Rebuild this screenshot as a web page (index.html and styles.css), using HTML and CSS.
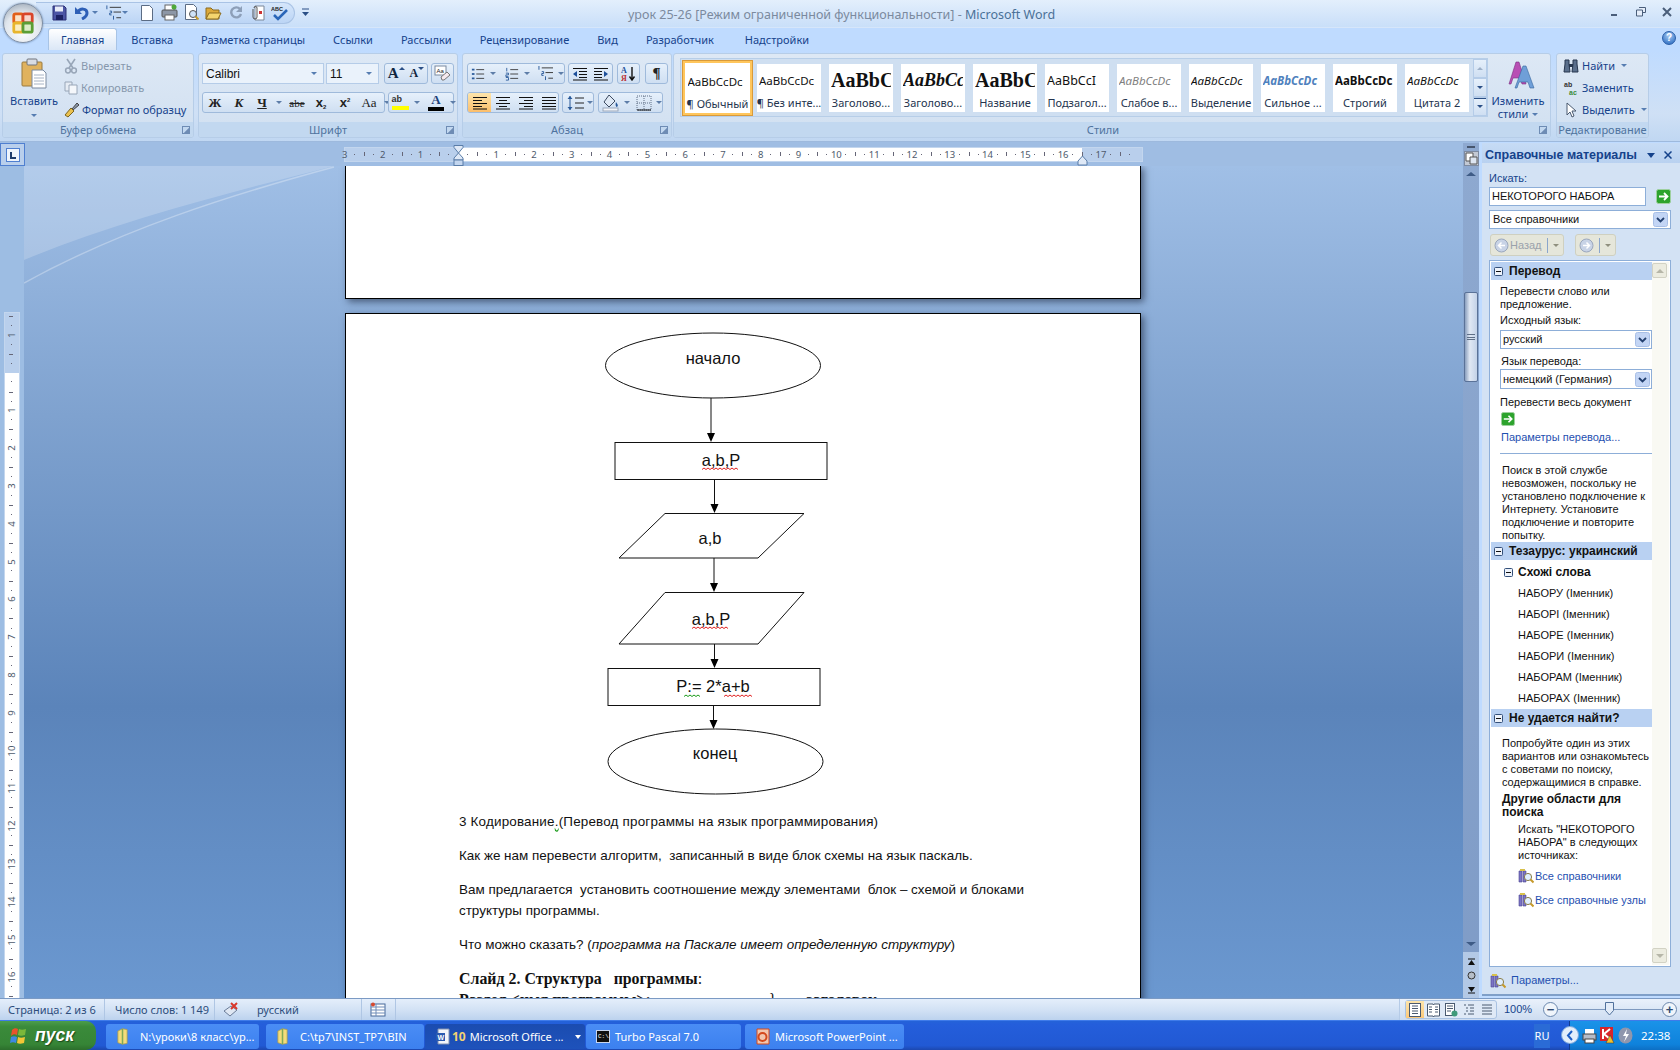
FILE: index.html
```html
<!DOCTYPE html>
<html lang="ru">
<head>
<meta charset="utf-8">
<title>урок 25-26 - Microsoft Word</title>
<link rel="stylesheet" href="styles.css">
</head>
<body>
<svg class="defs" width="0" height="0">
  <symbol id="lines-l" viewBox="0 0 16 14"><path d="M1 1.5h14M1 4.5h9M1 7.5h14M1 10.5h9M1 13h14" stroke="#111"/></symbol>
  <symbol id="lines-c" viewBox="0 0 16 14"><path d="M1 1.5h14M4 4.5h8M1 7.5h14M4 10.5h8M1 13h14" stroke="#111"/></symbol>
  <symbol id="lines-r" viewBox="0 0 16 14"><path d="M1 1.5h14M6 4.5h9M1 7.5h14M6 10.5h9M1 13h14" stroke="#111"/></symbol>
  <symbol id="lines-j" viewBox="0 0 16 14"><path d="M1 1.5h14M1 4.5h14M1 7.5h14M1 10.5h14M1 13h14" stroke="#111"/></symbol>
  <symbol id="bul" viewBox="0 0 16 16"><rect x="1" y="2" width="3" height="2" fill="#2a5a9a"/><rect x="1" y="7" width="3" height="2" fill="#2a5a9a"/><rect x="1" y="12" width="3" height="2" fill="#2a5a9a"/><path d="M6 3h9M6 8h9M6 13h9" stroke="#333"/></symbol>
  <symbol id="num" viewBox="0 0 16 16"><path d="M2 1v4M1 7h3v2H1v2h3M1 12h3v3H1" stroke="#2a5a9a" fill="none"/><path d="M6 3h9M6 8h9M6 13h9" stroke="#333"/></symbol>
  <symbol id="multi" viewBox="0 0 18 16"><path d="M2 0v4M5 6h2v2H5v2h2M9 11v4" stroke="#2a5a9a" fill="none"/><path d="M5 2h12M9 7h8M12 13h5" stroke="#333"/></symbol>
  <symbol id="outd" viewBox="0 0 16 14"><path d="M1 1.5h14M7 4.5h8M7 7.5h8M7 10.5h8M1 13h14" stroke="#111"/><path d="M1 7l4-3v6z" fill="#1d4f9a"/></symbol>
  <symbol id="ind" viewBox="0 0 16 14"><path d="M1 1.5h14M1 4.5h8M1 7.5h8M1 10.5h8M1 13h14" stroke="#111"/><path d="M15 7l-4-3v6z" fill="#1d4f9a"/></symbol>
  <symbol id="go" viewBox="0 0 15 15"><rect x=".5" y=".5" width="14" height="14" rx="2" fill="#2da32d" stroke="#9fd09f"/><path d="M3 7.5h8M8 4l3.5 3.5L8 11" stroke="#fff" stroke-width="1.8" fill="none"/></symbol>
  <symbol id="chev" viewBox="0 0 15 15"><rect x=".5" y=".5" width="14" height="14" rx="2" fill="#c3d5f5" stroke="#a8bfe6"/><path d="M4 6l3.5 3.5L11 6" stroke="#24406f" stroke-width="1.8" fill="none"/></symbol>
  <symbol id="tog" viewBox="0 0 9 9"><rect x=".5" y=".5" width="8" height="8" rx="1" fill="#eef3fb" stroke="#34507a"/><path d="M2 4.5h5" stroke="#111"/></symbol>
  <symbol id="ref" viewBox="0 0 16 16"><path d="M1 3h3v11H1zM5 3h3v11H5z" fill="#7b74c4" stroke="#4a4590" stroke-width=".6"/><path d="M2 1h5v2H2z" fill="#d8c14c"/><circle cx="10" cy="9" r="3.6" fill="#dfeeff" stroke="#8a7d46"/><path d="M12.5 11.5l3 3" stroke="#c79a2b" stroke-width="2"/></symbol>
  <symbol id="folder" viewBox="0 0 14 22"><path d="M1 4l6-3 6 1v18l-6 1-6-2z" fill="#f3dc7a" stroke="#a79a4e"/><path d="M7 1v20" stroke="#7eaa58" stroke-width="2"/></symbol>
</svg>

<div class="app">
  <header class="titlebar">
    <div class="orb">
      <svg width="24" height="24" viewBox="0 0 26 26"><rect x="3" y="3" width="10" height="10" rx="2" fill="#fbe3c8" stroke="#e2601a" stroke-width="3"/><rect x="13" y="3" width="10" height="10" rx="2" fill="#f8d6cc" stroke="#d9462a" stroke-width="3"/><rect x="3" y="13" width="10" height="10" rx="2" fill="#fbeec2" stroke="#e8b52c" stroke-width="3"/><rect x="13" y="13" width="10" height="10" rx="2" fill="#dcedc6" stroke="#5c9e34" stroke-width="3"/></svg>
    </div>
    <div class="qat">
      <svg class="q-save" width="15" height="16" viewBox="0 0 15 16"><path d="M1 1h11l2 2v12H1z" fill="#4b55a5" stroke="#2c3177"/><rect x="3" y="1.5" width="8" height="5" fill="#e8ecf8"/><rect x="4" y="10" width="7" height="5" fill="#1c2264"/></svg>
      <svg class="q-undo" width="14" height="15" viewBox="0 0 14 15"><path d="M3 7c2-4 9-4 9 1 0 3-3 5-5 6" stroke="#2e5fb6" stroke-width="3" fill="none"/><path d="M0 2v7h7z" fill="#2e5fb6"/></svg>
      <i class="dd dd-q1"></i>
      <svg class="q-multi" width="17" height="16"><use href="#multi"/></svg>
      <i class="dd dd-q2"></i>
      <svg class="q-new" width="12" height="16" viewBox="0 0 12 16"><path d="M.5.5h8l3 3v12H.5z" fill="#fff" stroke="#5b6c84"/></svg>
      <svg class="q-print" width="17" height="17" viewBox="0 0 17 17"><rect x="4" y="1" width="9" height="6" fill="#fff" stroke="#666"/><rect x="1" y="6" width="15" height="7" rx="1" fill="#8d97a6" stroke="#555"/><rect x="4" y="11" width="9" height="5" fill="#fff" stroke="#666"/><circle cx="13" cy="3" r="2.5" fill="#4fa93a"/></svg>
      <svg class="q-prev" width="14" height="17" viewBox="0 0 14 17"><path d="M.5.5h8l3 3v12H.5z" fill="#fff" stroke="#5b6c84"/><circle cx="8" cy="10" r="3.5" fill="#cfe3f8" stroke="#555"/><path d="M10.5 12.5l3 3" stroke="#c79a2b" stroke-width="2"/></svg>
      <svg class="q-open" width="17" height="16" viewBox="0 0 17 16"><path d="M1 3h5l2 2h6v9H1z" fill="#dca93a" stroke="#8a6a1e"/><path d="M1 14l3-6h12l-3 6z" fill="#f4d56e" stroke="#8a6a1e"/></svg>
      <svg class="q-redo" width="13" height="15" viewBox="0 0 13 15"><path d="M10 4a5 5 0 1 0 1 5" stroke="#8d9fb8" stroke-width="2.4" fill="none"/><path d="M12 1v6H6z" fill="#8d9fb8"/></svg>
      <svg class="q-att" width="15" height="16" viewBox="0 0 15 16"><path d="M5 1h9v14H5z" fill="#fff" stroke="#7b8798"/><path d="M3 4v8a2 2 0 0 0 4 0V3a1.400 1.400 0 0 0-3 0" fill="none" stroke="#555"/><rect x="9" y="6" width="3" height="3" fill="#c33"/></svg>
      <svg class="q-spell" width="17" height="16" viewBox="0 0 17 16"><text x="0" y="6" class="svg-abc">ABC</text><path d="M3 10l4 4 9-9" stroke="#2b66b8" stroke-width="2.6" fill="none"/></svg>
    </div>
    <svg class="q-cust" width="7" height="9" viewBox="0 0 7 9"><path d="M0 1h7" stroke="#2a4f86"/><path d="M0 4h7L3.500 8z" fill="#2a4f86"/></svg>
    <div class="doc-title">урок 25-26 [Режим ограниченной функциональности] - <span class="doc-title-app">Microsoft Word</span></div>
    <div class="winctl">
      <svg width="10" height="10" viewBox="0 0 10 10"><path d="M1 7h6v2H1z" fill="#4a5e7a"/></svg>
      <svg width="10" height="10" viewBox="0 0 10 10"><path d="M3 .5h6.500v5H7M.5 3h6v6h-6z" fill="#e6eefa" stroke="#4a5e7a"/></svg>
      <svg width="10" height="10" viewBox="0 0 10 10"><path d="M1 1l8 8M9 1L1 9" stroke="#4a5e7a" stroke-width="2"/></svg>
    </div>
  </header>

  <nav class="tabs">
    <span class="tab tab-active">Главная</span>
    <span class="tab">Вставка</span>
    <span class="tab">Разметка страницы</span>
    <span class="tab">Ссылки</span>
    <span class="tab">Рассылки</span>
    <span class="tab">Рецензирование</span>
    <span class="tab">Вид</span>
    <span class="tab">Разработчик</span>
    <span class="tab tab-last">Надстройки</span>
    <span class="help">?</span>
  </nav>

  <section class="ribbon">
    <div class="group g-clip">
      <div class="g-body clip-body">
        <div class="paste">
          <svg width="26" height="31" viewBox="0 0 26 31"><rect x="1" y="4" width="20" height="24" rx="1" fill="#e0b25e" stroke="#9a7a3e"/><rect x="6" y="1" width="10" height="6" rx="1" fill="#d8dce4" stroke="#70747c"/><path d="M11 12h11l3 3v15H11z" fill="#fff" stroke="#7a8aa0"/><path d="M13 17h10M13 20h10M13 23h10M13 26h10" stroke="#a7b3c4"/></svg>
          <span class="paste-l">Вставить</span>
          <i class="dd"></i>
        </div>
        <div class="clip-list">
          <span class="clip-i off"><svg width="14" height="16" viewBox="0 0 14 16"><path d="M3 1l6 9M11 1L5 10" stroke="#98a6b8" stroke-width="1.600"/><circle cx="4" cy="12.500" r="2.400" fill="none" stroke="#98a6b8" stroke-width="1.500"/><circle cx="10" cy="12.500" r="2.400" fill="none" stroke="#98a6b8" stroke-width="1.500"/></svg>Вырезать</span>
          <span class="clip-i off"><svg width="14" height="14" viewBox="0 0 14 14"><path d="M1 1h7v9H1z" fill="#e6ecf4" stroke="#98a6b8"/><path d="M5 4h8v9H5z" fill="#f4f7fb" stroke="#98a6b8"/></svg>Копировать</span>
          <span class="clip-i"><svg width="15" height="16" viewBox="0 0 15 16"><path d="M8 7l5-6 2 2-6 5z" fill="#8a98ad" stroke="#444"/><path d="M1 13l6-7 3 3-6 6z" fill="#eac14f" stroke="#7a6420"/></svg>Формат по образцу</span>
        </div>
      </div>
      <div class="g-label">Буфер обмена<i class="launch"></i></div>
    </div>

    <div class="group g-font">
      <div class="g-body tool-rows">
        <div class="tool-row">
          <span class="combo c-font">Calibri<i class="dd"></i></span>
          <span class="combo c-size">11<i class="dd"></i></span>
          <span class="tg tg-grow"><b class="t-a1">A</b><i class="up"></i><b class="t-a2">A</b><i class="down"></i></span>
          <span class="tg tg-one"><svg width="17" height="17" viewBox="0 0 17 17"><rect x="1" y="1" width="11" height="9" fill="#fff" stroke="#7a8aa0"/><text x="2.500" y="8" class="svg-aa">Aa</text><path d="M7 12l6-5 3 3-6 5H8z" fill="#f4e9ee" stroke="#777"/></svg></span>
        </div>
        <div class="tool-row">
          <span class="tg tg-bold">
            <b class="tb ser">Ж</b><b class="tb ser ital">К</b><b class="tb ser und">Ч</b><i class="dd dd-b"></i><span class="tb strike">abe</span><b class="tb xsub">x<small>2</small></b><b class="tb xsup">x<small>2</small></b><span class="tb ser aa">Aa</span><i class="dd dd-b"></i>
          </span>
          <span class="tg tg-color">
            <span class="col-i"><span class="hl">ab</span></span><i class="dd dd-b"></i>
            <span class="col-i col-a"><b class="ca">A</b><i class="black-bar"></i></span><i class="dd dd-b"></i>
          </span>
        </div>
      </div>
      <div class="g-label">Шрифт<i class="launch"></i></div>
    </div>

    <div class="group g-para">
      <div class="g-body tool-rows">
        <div class="tool-row">
          <span class="tg tg-list"><span class="ic"><svg width="14" height="14"><use href="#bul"/></svg></span><i class="dd dd-b"></i><span class="ic"><svg width="14" height="14"><use href="#num"/></svg></span><i class="dd dd-b"></i><span class="ic"><svg width="17" height="15"><use href="#multi"/></svg></span><i class="dd dd-b"></i></span>
          <span class="tg tg-ind"><span class="ic"><svg width="16" height="14"><use href="#outd"/></svg></span><span class="ic"><svg width="16" height="14"><use href="#ind"/></svg></span></span>
          <span class="tg tg-one"><svg width="15" height="16" viewBox="0 0 15 16"><text x="0" y="7" class="svg-sort1">А</text><text x="0" y="15" class="svg-sort2">Я</text><path d="M11 1v12M8.500 10.500l2.500 3.500 2.500-3.500" stroke="#111" fill="none" stroke-width="1.400"/></svg></span>
          <span class="tg tg-one pil">¶</span>
        </div>
        <div class="tool-row">
          <span class="tg tg-align"><span class="ic on"><svg width="16" height="14"><use href="#lines-l"/></svg></span><span class="ic"><svg width="16" height="14"><use href="#lines-c"/></svg></span><span class="ic"><svg width="16" height="14"><use href="#lines-r"/></svg></span><span class="ic"><svg width="16" height="14"><use href="#lines-j"/></svg></span></span>
          <span class="tg tg-sp"><svg width="17" height="16" viewBox="0 0 17 16"><path d="M3 1v14" stroke="#2a5a9a"/><path d="M.5 4L3 1l2.500 3zM.5 12L3 15l2.500-3z" fill="#2a5a9a"/><path d="M8 3h9M8 8h9M8 13h9" stroke="#222"/></svg><i class="dd dd-b"></i></span>
          <span class="tg tg-fill"><svg class="fill-i" width="18" height="18" viewBox="0 0 18 18"><path d="M7 1l6 6-6 6-5-5z" fill="#dfe9f5" stroke="#3c4a60"/><path d="M14 8c1 2 3 3 1 5-1 0-2-2-1-5z" fill="#2a5a9a"/><rect x="1" y="14" width="15" height="3" fill="#f2f4f8" stroke="#9aa8bc"/></svg><i class="dd dd-b"></i><svg class="fill-i" width="16" height="16" viewBox="0 0 16 16"><path d="M1 1h14v14H1zM8 1v14M1 8h14" fill="none" stroke="#5f6f85" stroke-dasharray="1 1"/><path d="M1 15h14" stroke="#111"/></svg><i class="dd dd-b"></i></span>
        </div>
      </div>
      <div class="g-label">Абзац<i class="launch"></i></div>
    </div>

    <div class="group g-styles">
      <div class="g-body styles-body">
        <div class="gallery">
          <div class="st st-active"><span class="st-s">AaBbCcDc</span><span class="st-l">¶ Обычный</span></div>
          <div class="st"><span class="st-s">AaBbCcDc</span><span class="st-l">¶ Без инте...</span></div>
          <div class="st"><span class="st-s s-h1">AaBbC</span><span class="st-l">Заголово...</span></div>
          <div class="st"><span class="st-s s-h2">AaBbCc</span><span class="st-l">Заголово...</span></div>
          <div class="st"><span class="st-s s-ti">AaBbC</span><span class="st-l">Название</span></div>
          <div class="st"><span class="st-s s-sub">AaBbCcI</span><span class="st-l">Подзагол...</span></div>
          <div class="st"><span class="st-s s-faint">AaBbCcDc</span><span class="st-l">Слабое в...</span></div>
          <div class="st"><span class="st-s s-em">AaBbCcDc</span><span class="st-l">Выделение</span></div>
          <div class="st"><span class="st-s s-str">AaBbCcDc</span><span class="st-l">Сильное ...</span></div>
          <div class="st"><span class="st-s s-bold">AaBbCcDc</span><span class="st-l">Строгий</span></div>
          <div class="st"><span class="st-s s-em">AaBbCcDc</span><span class="st-l">Цитата 2</span></div>
          <div class="gal-btns"><span class="gb"><i class="up"></i></span><span class="gb"><i class="down"></i></span><span class="gb gb-more"><i class="down"></i></span></div>
        </div>
        <div class="change">
          <svg width="34" height="30" viewBox="0 0 34 30"><path d="M8 24L15 2h3l7 22h-4l-2-6h-7l-2 6z" fill="#b84fb4" stroke="#7a2f80" stroke-width=".6"/><path d="M14 28L22 6h3l8 22h-4l-2-6h-9l-2 6z" fill="#6f9fd8" stroke="#38669e" stroke-width=".6"/></svg>
          <span class="change-l">Изменить</span>
          <span class="change-l">стили<i class="dd"></i></span>
        </div>
      </div>
      <div class="g-label lab-styles">Стили<i class="launch"></i></div>
    </div>

    <div class="group g-edit">
      <div class="g-body edit-body">
        <span class="ed-i"><svg width="16" height="14" viewBox="0 0 16 14"><path d="M2 1h4v4l1 8H1l1-8zM10 1h4v4l1 8H9l1-8z" fill="#5a6f8c" stroke="#26364e"/><path d="M6 5h4v3H6z" fill="#26364e"/></svg>Найти<i class="dd"></i></span>
        <span class="ed-i"><svg width="16" height="16" viewBox="0 0 16 16"><text x="1" y="7" class="svg-rep1">ab</text><text x="6" y="15" class="svg-rep2">ac</text></svg>Заменить</span>
        <span class="ed-i"><svg width="16" height="16" viewBox="0 0 16 16"><path d="M4 1v12l3-3 2 5 2-1-2-5h4z" fill="#fff" stroke="#4b5a70"/></svg>Выделить<i class="dd"></i></span>
      </div>
      <div class="g-label">Редактирование</div>
    </div>
  </section>

  <div class="workspace">
    <div class="main">
      <div class="ruler-row">
        <span class="tabsel"><svg width="14" height="14" viewBox="0 0 14 14"><rect x=".5" y=".5" width="13" height="13" fill="#eef4fc" stroke="#4f7fd0"/><path d="M5 4v6h5" stroke="#1c3a6a" stroke-width="2" fill="none"/></svg></span>
        <div class="ruler">
          <span class="rc rc-start">3</span><span class="rc">2</span><span class="rc">1</span><span class="rc"></span><span class="rc">1</span><span class="rc">2</span><span class="rc">3</span><span class="rc">4</span><span class="rc">5</span><span class="rc">6</span><span class="rc">7</span><span class="rc">8</span><span class="rc">9</span><span class="rc">10</span><span class="rc">11</span><span class="rc">12</span><span class="rc">13</span><span class="rc">14</span><span class="rc">15</span><span class="rc">16</span><span class="rc">17</span><span class="rc rc-end"></span>
          <svg class="ind-mark" width="11" height="21" viewBox="0 0 11 21"><path d="M1 .5h9v2L5.500 8 1 2.500zM5.500 8L10 13v2H1v-2z" fill="#dfe9f7" stroke="#5a7da8"/><rect x="1" y="15" width="9" height="5.500" fill="#c3d6ef" stroke="#5a7da8"/></svg>
          <svg class="rind-mark" width="11" height="11" viewBox="0 0 11 11"><path d="M5.500 1L10 6v4H1V6z" fill="#dfe9f7" stroke="#5a7da8"/></svg>
        </div>
      </div>
      <div class="doc-row">
        <div class="vcol">
          <div class="vruler">
            <span class="vc"><em>1</em></span><span class="vc"></span><span class="vc"><em>1</em></span><span class="vc"><em>2</em></span><span class="vc"><em>3</em></span><span class="vc"><em>4</em></span><span class="vc"><em>5</em></span><span class="vc"><em>6</em></span><span class="vc"><em>7</em></span><span class="vc"><em>8</em></span><span class="vc"><em>9</em></span><span class="vc"><em>10</em></span><span class="vc"><em>11</em></span><span class="vc"><em>12</em></span><span class="vc"><em>13</em></span><span class="vc"><em>14</em></span><span class="vc"><em>15</em></span><span class="vc"><em>16</em></span><span class="vc"></span>
          </div>
        </div>
        <div class="doc">
          <svg class="swoosh" width="340" height="120" viewBox="24 166 340 120"><path d="M24 166H334C240 190 120 220 24 260z" fill="#fff" opacity=".2"/><path d="M24 283C120 230 230 195 334 167" fill="none" stroke="#fff" stroke-opacity=".3" stroke-width="1.500"/></svg>
          <div class="page page-1"></div>
          <div class="page page-2">
            <svg class="chart" width="794" height="497" viewBox="346 314 794 497">
              <g class="ln">
                <ellipse cx="713" cy="365.500" rx="107.500" ry="32.500"/>
                <rect x="615" y="442.500" width="212" height="37"/>
                <path d="M665 513.500H804L758 558H619z"/>
                <path d="M665 592.500H804L758 644H619z"/>
                <rect x="608" y="668.500" width="212" height="37"/>
                <ellipse cx="715.500" cy="761.500" rx="107.500" ry="32.500"/>
                <path d="M711 398V434M714.500 479.500V505"/>
                <path d="M714 558V584M714.500 644V660M713.500 705.500V721"/>
              </g>
              <g class="hd">
                <path d="M707 433h8l-4 9zM710.500 504h8l-4 9zM710 583h8l-4 9zM710.500 659h8l-4 9zM709.500 720h8l-4 9z"/>
              </g>
              <g class="ct">
                <text x="713" y="364">начало</text>
                <text x="721" y="466">a,b,P</text>
                <text x="710" y="544">a,b</text>
                <text x="711" y="625">a,b,P</text>
                <text x="713" y="692">P:= 2*a+b</text>
                <text x="715" y="759">конец</text>
              </g>
              <g class="sq-red">
                <path d="M702 469.500l2-1.500 2 1.500 2-1.500 2 1.500 2-1.500 2 1.500 2-1.500 2 1.500 2-1.500 2 1.500 2-1.500 2 1.500 2-1.500 2 1.500 2-1.500 2 1.500 2-1.500 2 1.500"/>
                <path d="M692 628.500l2-1.500 2 1.500 2-1.500 2 1.500 2-1.500 2 1.500 2-1.500 2 1.500 2-1.500 2 1.500 2-1.500 2 1.500 2-1.500 2 1.500 2-1.500 2 1.500 2-1.500 2 1.500"/>
                <path d="M724 696.500l2-1.500 2 1.500 2-1.500 2 1.500 2-1.500 2 1.500 2-1.500 2 1.500 2-1.500 2 1.500 2-1.500 2 1.500 2-1.500 2 1.500"/>
              </g>
              <path class="sq-green" d="M684 696.500l2-1.500 2 1.500 2-1.500 2 1.500 2-1.500 2 1.500 2-1.500 2 1.500"/>
            </svg>
            <div class="text">
              <p class="first">3 Кодирование<span class="sq">.</span>(Перевод программы на язык программирования)</p>
              <p>Как же нам перевести алгоритм,&nbsp; записанный в виде блок схемы на язык паскаль.</p>
              <p>Вам предлагается&nbsp; установить соотношение между элементами&nbsp; блок – схемой и блоками<br>структуры программы.</p>
              <p>Что можно сказать? (<em>программа на Паскале имеет определенную структуру</em>)</p>
              <p class="slide"><b>Слайд 2. Структура &nbsp; программы</b>:</p>
              <p class="slide"><b>Раздел &lt;имя программы&gt;;</b><span class="curly">}</span><b>заголовок</b></p>
            </div>
          </div>
        </div>
      </div>
    </div>

    <div class="vscroll">
      <i class="split"></i>
      <span class="vs-ico"><svg width="13" height="13" viewBox="0 0 13 13"><path d="M1 1h7v8H1z" fill="#fff" stroke="#555"/><path d="M5 5h7v7H5z" fill="#dde6f2" stroke="#555"/></svg></span>
      <i class="arr-up"></i>
      <span class="thumb"><i class="grip"></i></span>
      <i class="arr-dn"></i>
      <span class="vs-btns">
        <svg width="9" height="9" viewBox="0 0 9 9"><path d="M1 1h7" stroke="#111"/><path d="M4.500 2L8 7H1z" fill="#111"/></svg>
        <svg width="9" height="9" viewBox="0 0 9 9"><circle cx="4.500" cy="4.500" r="3.500" fill="#b6bec8" stroke="#333"/></svg>
        <svg width="9" height="9" viewBox="0 0 9 9"><path d="M1 8h7" stroke="#111"/><path d="M4.500 7L8 2H1z" fill="#111"/></svg>
      </span>
    </div>

    <aside class="pane">
      <div class="pane-head"><span>Справочные материалы</span><i class="pane-dd"></i><svg width="8" height="8" viewBox="0 0 8 8"><path d="M.5.500l7 7M7.500.500l-7 7" stroke="#15428b" stroke-width="1.500"/></svg></div>
      <div class="pane-body">
        <div class="lab">Искать:</div>
        <div class="srch"><span class="inp">НЕКОТОРОГО НАБОРА</span><svg width="15" height="15"><use href="#go"/></svg></div>
        <div class="sel sel-all"><span>Все справочники</span><svg width="15" height="15"><use href="#chev"/></svg></div>
        <div class="navs">
          <span class="nav nav-b"><svg width="15" height="15" viewBox="0 0 15 15"><circle cx="7.500" cy="7.500" r="6.500" fill="#c8d3e6" stroke="#9aa7bd"/><path d="M11 7.500H5M7.500 4.500l-3 3 3 3" stroke="#fff" stroke-width="1.500" fill="none"/></svg>Назад<i class="nsep"></i><i class="dd dd-g"></i></span>
          <span class="nav nav-f"><svg width="15" height="15" viewBox="0 0 15 15"><circle cx="7.500" cy="7.500" r="6.500" fill="#c8d3e6" stroke="#9aa7bd"/><path d="M4 7.500h6M7.500 4.500l3 3-3 3" stroke="#fff" stroke-width="1.500" fill="none"/></svg><i class="nsep"></i><i class="dd dd-g"></i></span>
        </div>
        <div class="results">
          <div class="res-main">
            <div class="sec"><svg width="9" height="9"><use href="#tog"/></svg>Перевод</div>
            <div class="tr">
              <div class="l t1">Перевести слово или<br>предложение.</div>
              <div class="l t2">Исходный язык:</div>
              <div class="sel in-sel s1"><span>русский</span><svg width="15" height="15"><use href="#chev"/></svg></div>
              <div class="l t3">Язык перевода:</div>
              <div class="sel in-sel s2"><span>немецкий (Германия)</span><svg width="15" height="15"><use href="#chev"/></svg></div>
              <div class="l t4">Перевести весь документ</div>
              <svg class="go2" width="14" height="14"><use href="#go"/></svg>
              <div class="l link t5">Параметры перевода...</div>
              <hr class="rule">
            </div>
            <div class="para p1">Поиск в этой службе<br>невозможен, поскольку не<br>установлено подключение к<br>Интернету. Установите<br>подключение и повторите<br>попытку.</div>
            <div class="sec"><svg width="9" height="9"><use href="#tog"/></svg>Тезаурус: украинский</div>
            <div class="sub"><svg width="9" height="9"><use href="#tog"/></svg>Схожі слова</div>
            <div class="hit">НАБОРУ (Іменник)</div>
            <div class="hit">НАБОРІ (Іменник)</div>
            <div class="hit">НАБОРЕ (Іменник)</div>
            <div class="hit">НАБОРИ (Іменник)</div>
            <div class="hit">НАБОРАМ (Іменник)</div>
            <div class="hit">НАБОРАХ (Іменник)</div>
            <div class="sec sec-last"><svg width="9" height="9"><use href="#tog"/></svg>Не удается найти?</div>
            <div class="para p2">Попробуйте один из этих<br>вариантов или ознакомьтесь<br>с советами по поиску,<br>содержащимися в справке.</div>
            <div class="para p3"><b>Другие области для<br>поиска</b></div>
            <div class="ind p4">Искать "НЕКОТОРОГО<br>НАБОРА" в следующих<br>источниках:</div>
            <div class="ind lk lk1"><svg width="16" height="16"><use href="#ref"/></svg><span>Все справочники</span></div>
            <div class="ind lk lk2"><svg width="16" height="16"><use href="#ref"/></svg><span>Все справочные узлы</span></div>
          </div>
          <div class="res-bar"><span class="rb"><i class="rb-up"></i></span><span class="rb"><i class="rb-dn"></i></span></div>
        </div>
        <div class="pane-foot"><svg width="16" height="16"><use href="#ref"/></svg><span>Параметры...</span></div>
      </div>
    </aside>
  </div>

  <footer class="status">
    <span class="s-c s-page">Страница: 2 из 6</span>
    <span class="s-c s-words">Число слов: 1 149</span>
    <span class="s-c s-lang"><svg width="16" height="15" viewBox="0 0 16 15"><path d="M1 9l7-5 6 4-7 6z" fill="#dfe7f3" stroke="#6a7c98"/><path d="M8 1l6 6M14 1L8 7" stroke="#d8362a" stroke-width="2"/></svg><span class="s-ru">русский</span></span>
    <span class="s-c s-ico"><svg width="16" height="15" viewBox="0 0 16 15"><rect x="1" y="2" width="14" height="12" fill="#fff" stroke="#47689a"/><path d="M1 5h14M1 8h14M1 11h14M6 2v12" stroke="#6f8cb8"/><circle cx="3" cy="2.500" r="2" fill="#d8492e"/></svg></span>
    <div class="s-right">
      <span class="views">
        <span class="v on"><svg width="12" height="14" viewBox="0 0 12 14"><rect x=".5" y=".5" width="11" height="13" fill="#fff" stroke="#4a5a70"/><path d="M3 3h6M3 5.500h6M3 8h6M3 10.500h6" stroke="#4a5a70"/></svg></span>
        <span class="v"><svg width="13" height="14" viewBox="0 0 13 14"><path d="M.5 1h5.500l.5 1 .5-1h5.500v12H7l-.5 1-.5-1H.500z" fill="#fff" stroke="#4a5a70"/><path d="M2 4h3M2 6.500h3M2 9h3M8 4h3M8 6.500h3M8 9h3" stroke="#4a5a70"/></svg></span>
        <span class="v"><svg width="13" height="14" viewBox="0 0 13 14"><rect x=".5" y=".5" width="9" height="12" fill="#fff" stroke="#4a5a70"/><path d="M2 3h6M2 5.500h6M2 8h4" stroke="#4a5a70"/><circle cx="9.500" cy="10.500" r="3" fill="#3f9a7a"/></svg></span>
        <span class="v"><svg width="12" height="14" viewBox="0 0 12 14"><path d="M1 2h2M5 2h6M3 5h2M7 5h4M3 8h2M7 8h4M1 11h2M5 11h6" stroke="#4a5a70"/></svg></span>
        <span class="v"><svg width="12" height="14" viewBox="0 0 12 14"><path d="M1 2h10M1 5h10M1 8h10M1 11h10" stroke="#4a5a70"/></svg></span>
      </span>
      <span class="zoomv">100%</span>
      <span class="zbtn">−</span>
      <span class="ztrack"><svg class="zthumb" width="9" height="14" viewBox="0 0 9 14"><path d="M.5.500h8v8L4.500 13 .5 8.500z" fill="#e3ecf8" stroke="#51719c"/></svg></span>
      <span class="zbtn">+</span>
    </div>
  </footer>

  <div class="taskbar">
    <div class="start">
      <svg width="19" height="19" viewBox="0 0 19 19"><path d="M2 4c2-2 4-2 6-1l-1 6c-2-1-4-1-6 1z" fill="#e8532b"/><path d="M9 3c2 1 4 1 7 0l-1 6c-3 1-5 1-7 0z" fill="#7bb83a"/><path d="M1 11c2-1 4-1 6 0l-1 6c-2-1-4-1-6 0z" fill="#3e89e2"/><path d="M8 11c2 1 4 1 7 0l-1 6c-3 1-5 1-7 0z" fill="#f4c636"/></svg>
      <span>пуск</span>
    </div>
    <div class="task tk1"><svg width="11" height="17"><use href="#folder"/></svg><span>N:\уроки\8 класс\ур...</span></div>
    <div class="task tk2"><svg width="11" height="17"><use href="#folder"/></svg><span>C:\tp7\INST_TP7\BIN</span></div>
    <div class="task tk3"><svg width="14" height="17" viewBox="0 0 14 17"><path d="M2 1h11v15H2z" fill="#f2f5fb" stroke="#8090b0"/><rect x="0" y="5" width="9" height="8" fill="#2a5ab0"/><text x="1.500" y="12" class="svg-w">W</text></svg><b class="cnt">10</b><span>Microsoft Office ...</span><i class="t-dd"></i></div>
    <div class="task tk4"><svg width="14" height="13" viewBox="0 0 14 13"><rect x=".5" y=".5" width="13" height="12" fill="#111" stroke="#c9d6ef"/><text x="2" y="8" class="svg-c">C:\</text></svg><span>Turbo Pascal 7.0</span></div>
    <div class="task tk5"><svg width="15" height="17" viewBox="0 0 15 17"><path d="M2 1h12v15H2z" fill="#f2c6ae" stroke="#d4491c"/><circle cx="7.500" cy="9" r="4" fill="none" stroke="#d4491c" stroke-width="2"/></svg><span>Microsoft PowerPoint ...</span></div>
    <span class="lang">RU</span>
    <div class="tray">
      <span class="tray-chev"><svg width="8" height="11" viewBox="0 0 8 11"><path d="M6 1L2 5.500 6 10" stroke="#1c5dc4" stroke-width="2" fill="none"/></svg></span>
      <svg width="15" height="16" viewBox="0 0 15 16"><rect x="3" y="1" width="9" height="5" fill="#fff"/><rect x="1" y="6" width="13" height="6" fill="#b5bcc8" stroke="#444"/><rect x="3" y="11" width="9" height="4" fill="#fff" stroke="#444"/></svg>
      <svg width="15" height="17" viewBox="0 0 15 17"><rect x="0" y="0" width="13" height="14" fill="#d8242a"/><path d="M3 2v10M10 2L4 7l6 5" stroke="#fff" stroke-width="2" fill="none"/><path d="M10 8l4 8H6z" fill="#f1c02c" stroke="#333" stroke-width=".5"/></svg>
      <svg width="15" height="17" viewBox="0 0 15 17"><ellipse cx="7.500" cy="8.500" rx="7" ry="8" fill="#8f96ad"/><path d="M9 2L5 9h3l-2 6 5-8H8z" fill="#fff"/></svg>
      <span class="clock">22:38</span>
    </div>
  </div>
</div>
</body>
</html>
```

FILE: styles.css
```css
* { box-sizing: border-box; }
html, body { margin: 0; height: 100%; overflow: hidden; }
body { font: 11px/13px "Noto Sans", "Liberation Sans", sans-serif; color: #111; background: #bfdbff; }
i, em { font-style: normal; }
svg { display: block; flex: none; }
.defs { position: absolute; }
.svg-abc { font: bold 5.500px "Liberation Sans", sans-serif; fill: #222; }
.svg-aa { font: 6px "Liberation Sans", sans-serif; fill: #222; }
.svg-sort1 { font: bold 8px "Liberation Serif", serif; fill: #1d4f9a; }
.svg-sort2 { font: bold 8px "Liberation Serif", serif; fill: #b33; }
.svg-rep1 { font: bold 7px "Liberation Sans", sans-serif; fill: #333; }
.svg-rep2 { font: bold 7px "Liberation Sans", sans-serif; fill: #3a8a3a; }
.svg-w { font: bold 7px "Liberation Sans", sans-serif; fill: #fff; }
.svg-c { font: 6px "Liberation Mono", monospace; fill: #fff; }

.app { width: 1680px; height: 1050px; display: flex; flex-direction: column; }

/* triangles */
.dd { display: inline-block; width: 0; height: 0; border: 3px solid transparent; border-top: 3px solid #567db1; border-bottom: 0; flex: none; }
.up { display: block; width: 0; height: 0; border: 3px solid transparent; border-bottom: 3px solid #2a4f86; border-top: 0; }
.down { display: block; width: 0; height: 0; border: 3px solid transparent; border-top: 3px solid #2a4f86; border-bottom: 0; }

/* title bar */
.titlebar { height: 28px; display: flex; align-items: center; position: relative; background: linear-gradient(#e3effc, #d3e5fa 60%, #c9dff9); border-bottom: 1px solid #d6e6fa; }
.orb { position: absolute; left: 3px; top: 3px; width: 40px; height: 40px; border-radius: 50%; display: flex; align-items: center; justify-content: center; background: radial-gradient(circle at 50% 70%, #fff, #dfe5ec 55%, #8c99a8); border: 1px solid #7f8ea3; box-shadow: 0 0 2px #5e7ca5; z-index: 3; }
.qat { width: 259px; margin-left: 36px; height: 22px; margin-top: -2px; display: flex; align-items: center; background: linear-gradient(#d5e6fb, #bcd5f5); border: 1px solid #a9c3e5; border-left: 0; border-radius: 0 11px 11px 0; padding-left: 16px; }
.q-undo { margin-left: 8px; }
.dd-q1 { margin-left: 3px; }
.q-multi { margin-left: 7px; }
.dd-q2 { margin-left: 0; }
.q-new { margin-left: 13px; }
.q-print { margin-left: 8px; }
.q-prev { margin-left: 7px; }
.q-open { margin-left: 6px; }
.q-redo { margin-left: 8px; }
.q-att { margin-left: 7px; }
.q-spell { margin-left: 6px; }
.q-cust { margin-left: 7px; margin-top: -2px; }
.doc-title { margin-left: 319px; margin-top: 1px; font-size: 12.500px; color: #7b8a9e; white-space: nowrap; }
.doc-title-app { color: #4a7198; }
.winctl { margin-left: auto; margin-right: 8px; display: flex; gap: 16px; margin-top: -3px; }

/* tabs */
.tabs { height: 22px; display: flex; align-items: stretch; padding-left: 48px; background: #bfdbff; position: relative; }
.tab { padding: 0 14px; display: flex; align-items: center; color: #15428b; font-size: 11px; white-space: nowrap; }
.tab-active { background: linear-gradient(#fff, #e8f0fa 60%, #dbe7f6); border: 1px solid #a8c4e6; border-bottom: 0; border-radius: 3px 3px 0 0; padding: 0 12px; }
.tab-last { margin-left: 3px; }
.help { position: absolute; right: 4px; top: 3px; width: 14px; height: 14px; border-radius: 50%; background: radial-gradient(circle at 50% 30%, #a9ccf4, #1e62bb); border: 1px solid #2a5ea8; color: #fff; font: bold 10px/12px "Liberation Sans", sans-serif; text-align: center; }

/* ribbon */
.ribbon { height: 92px; display: flex; padding: 3px 0 0 2px; background: linear-gradient(#bfdbff, #cfe0f5 70%, #c0d7f2); border-bottom: 1px solid #9db9dd; }
.group { height: 85px; display: flex; flex-direction: column; background: linear-gradient(#dde8f5, #d1e0f1); border: 1px solid #b6cde8; border-radius: 3px; flex: none; overflow: hidden; }
.g-body { height: 68px; flex: none; }
.g-label { height: 15px; position: relative; text-align: center; color: #4f739e; background: #c2d8f0; font-size: 11px; line-height: 15px; white-space: nowrap; }
.lab-styles { padding-right: 18px; }
.launch { position: absolute; right: 3px; top: 4px; width: 8px; height: 8px; border: 1px solid #6e8cb4; background: linear-gradient(135deg, transparent 55%, #6e8cb4 60%); }
.g-clip { width: 192px; }
.g-font { width: 260px; margin-left: 4px; }
.g-para { width: 210px; margin-left: 4px; }
.g-styles { width: 878px; margin-left: 1px; }
.g-edit { width: 93px; margin-left: 5px; }

.clip-body { display: flex; }
.paste { width: 60px; display: flex; flex-direction: column; align-items: center; padding: 4px 0 0 2px; color: #15428b; }
.paste-l { margin-top: 5px; }
.paste .dd { margin-top: 7px; }
.clip-list { display: flex; flex-direction: column; padding: 3px 0 0 1px; gap: 5px; }
.clip-i { height: 17px; display: flex; align-items: center; gap: 3px; color: #15428b; white-space: nowrap; }
.clip-i.off { color: #8798ad; }

.tool-rows { display: flex; flex-direction: column; gap: 8px; padding: 9px 0 0 3px; }
.g-para .tool-rows { padding-left: 4px; }
.tool-row { display: flex; height: 21px; }
.combo { display: flex; align-items: center; justify-content: space-between; height: 21px; background: #eaf2fb; border: 1px solid #b5cce8; padding: 0 6px 0 3px; color: #111; font: 12px "Liberation Sans", sans-serif; }
.c-font { width: 122px; }
.c-size { width: 53px; margin-left: 2px; margin-right: 5px; }
.tg { display: flex; align-items: center; height: 21px; background: linear-gradient(#e6f0fb, #cfdff2); border: 1px solid #9fbadb; border-radius: 3px; margin-right: 3px; flex: none; }
.tg-one { width: 23px; justify-content: center; }
.tg-grow { width: 44px; justify-content: center; font-family: "Liberation Serif", serif; color: #12263f; }
.t-a1 { font-size: 15px; }
.t-a2 { font-size: 12px; margin-left: 5px; }
.tg-grow .up, .tg-grow .down { align-self: flex-start; margin-top: 3px; }
.tg-bold { width: 183px; }
.tb { width: 24px; text-align: center; flex: none; font: bold 13px "Liberation Sans", sans-serif; color: #222; }
.tb.ser { font-family: "Liberation Serif", serif; }
.tb.ital { font-style: italic; }
.tb.und { text-decoration: underline; width: 22px; }
.tb.strike { font: 400 11px "Liberation Serif", serif; text-decoration: line-through; }
.xsub small { font-size: 6px; vertical-align: -2px; }
.xsup small { font-size: 6px; vertical-align: 5px; }
.tb.aa { font-weight: 400; font-size: 13px; }
.dd-b { margin: 0 3px 0 3px; border-top-color: #5d7da8; }
.tg-color { width: 66px; }
.col-i { width: 22px; height: 19px; display: flex; flex-direction: column; align-items: center; flex: none; }
.hl { display: block; width: 17px; font: bold 9px/11px "Liberation Sans", sans-serif; border-bottom: 4px solid #ffff00; height: 16px; margin-top: 1px; text-align: left; color: #333; }
.col-i.col-a { margin-left: 2px; }
.ca { font: bold 13px/13px "Liberation Serif", serif; color: #1c3f78; }
.black-bar { display: block; width: 16px; height: 4px; background: #000; margin-top: 1px; }

.ic { width: 20px; height: 19px; display: flex; align-items: center; justify-content: center; flex: none; }
.ic.on { background: linear-gradient(#fde5ac, #fcbe6a); }
.tg-list { width: 98px; }
.tg-list .ic { width: 19px; }
.tg-list .dd-b { margin: 0 6px 0 3px; }
.tg-ind { width: 45px; justify-content: space-around; margin-right: 4px; }
.pil { font: bold 15px "Liberation Serif", serif; color: #222; margin-left: 2px; }
.tg-align { width: 92px; overflow: hidden; }
.tg-align .ic { width: 23px; }
.tg-sp { width: 32px; padding-left: 4px; }
.tg-fill { width: 65px; padding-left: 3px; margin-left: 1px; }
.tg-fill .dd-b { margin: 0 6px 0 4px; }

.styles-body { display: flex; padding: 4px 0 0 6px; }
.gallery { width: 808px; height: 59px; display: flex; align-items: center; gap: 8px; border: 1px solid #b7cee8; background: #cfdff1; position: relative; padding-left: 1px; }
.st { width: 64px; height: 48px; flex: none; background: #fff; display: flex; flex-direction: column; align-items: center; overflow: hidden; color: #222; }
.st-active { width: 71px; height: 56px; border: 1px solid #d99a3a; box-shadow: inset 0 0 0 2px #ffc65c; margin-right: -4px; padding-top: 4px; }
.st-s { height: 28px; display: block; width: 60px; overflow: hidden; white-space: nowrap; text-align: left; font: 11.500px/34px "Noto Sans", sans-serif; color: #111; }
.st-l { white-space: nowrap; line-height: 13px; font-size: 11px; margin-top: 4px; color: #24344e; }
.st-s.s-h1 { font: bold 20px/33px "Liberation Serif", serif; }
.st-s.s-h2 { font: italic bold 18px/33px "Liberation Serif", serif; }
.st-s.s-ti { font: bold 20px/33px "Liberation Serif", serif; }
.st-s.s-sub { font: 12.500px/33px "Noto Sans", sans-serif; }
.st-s.s-faint { font-style: italic; color: #808080; }
.st-s.s-em { font-style: italic; }
.st-s.s-str { font-style: italic; font-weight: 700; color: #4f81bd; }
.st-s.s-bold { font-weight: 700; }
.gal-btns { position: absolute; right: 0; top: 0; width: 14px; height: 57px; display: flex; flex-direction: column; }
.gb { flex: 1; border: 1px solid #b5cce8; background: linear-gradient(#e6f0fb, #cfdff2); display: flex; align-items: center; justify-content: center; }
.gb .up { border-bottom-color: #9db0c8; }
.gb-more { box-shadow: inset 0 3px 0 -2px #2a4f86; }
.change { width: 58px; margin-left: 1px; display: flex; flex-direction: column; align-items: center; color: #15428b; }
.change-l { line-height: 13px; white-space: nowrap; }
.change-l .dd { margin-left: 4px; vertical-align: 2px; }
.change svg { margin: 2px 0 4px; }
.edit-body { display: flex; flex-direction: column; gap: 5px; padding: 3px 0 0 6px; }
.ed-i { height: 17px; display: flex; align-items: center; gap: 3px; color: #15428b; white-space: nowrap; }
.ed-i .dd { margin-left: 3px; }

/* workspace */
.workspace { flex: 1; display: flex; min-height: 0; }
.main { width: 1463px; display: flex; flex-direction: column; min-height: 0; }
.ruler-row { height: 24px; flex: none; display: flex; background: #9fbde3; }
.tabsel { width: 25px; height: 23px; margin-top: 1px; border: 1px solid #4f7fd0; background: #b9cfec; display: flex; align-items: center; justify-content: center; flex: none; }
.ruler { width: 797px; height: 13px; margin: 6px 0 0 320px; position: relative; display: flex; background: linear-gradient(to right, #b9cfec 113px, #fff 113px, #fff 737px, #b9cfec 737px); box-shadow: 0 0 0 1px #c3d6ee; }
.rc { flex: none; width: 37.800px; text-align: center; font: 9.500px/13px "Noto Sans", sans-serif; color: #4e5a6c;
  background-image: linear-gradient(#667, #667), linear-gradient(#667, #667), linear-gradient(#667, #667);
  background-size: 1px 1px, 1px 1px, 1px 4px; background-repeat: no-repeat; background-position: 9px 6px, 28px 6px, 0 4px; }
.rc.rc-start { width: 18.900px; text-align: left; text-indent: -3px; background-size: 1px 1px, 0 0, 0 0; background-position: 9px 6px, 0 0, 0 0; }
.rc.rc-end { width: 23px; background-position: 9px 6px, 0 0, 0 4px; background-size: 1px 1px, 0 0, 1px 4px; }
.ind-mark { position: absolute; left: 108px; top: -3px; }
.rind-mark { position: absolute; left: 732px; top: 7px; }

.doc-row { flex: 1; min-height: 0; display: flex; }
.vcol { width: 24px; flex: none; background: #9dbde3; padding: 147px 5px 0; overflow: hidden; }
.vruler { width: 14px; height: 685px; overflow: hidden; background: linear-gradient(#b9cfec 60px, #fff 60px); box-shadow: 0 0 0 1px #c3d6ee; padding-top: 3px; }
.vc { display: flex; align-items: center; justify-content: center; height: 37.800px; font: 9.500px/14px "Noto Sans", sans-serif; color: #4e5a6c;
  background-image: linear-gradient(#667, #667), linear-gradient(#667, #667), linear-gradient(#667, #667);
  background-size: 1px 1px, 1px 1px, 4px 1px; background-repeat: no-repeat; background-position: 6px 25%, 6px 75%, 4px 0; }
.vc em { display: block; transform: rotate(-90deg); }
.doc { flex: 1; position: relative; overflow: hidden; padding-left: 321px; background: linear-gradient(#a0bfe6, #7fa2cf 30%, #5b84ba 65%, #6b98d0); }
.swoosh { position: absolute; left: 0; top: 0; }
.page { width: 796px; background: #fff; border: 1px solid #000; box-shadow: 3px 3px 7px rgba(20, 30, 50, .55); position: relative; }
.page-1 { height: 134px; margin-top: -1px; }
.page-2 { height: 720px; margin-top: 14px; overflow: hidden; }
.chart .ln { fill: none; stroke: #111; stroke-width: 1; }
.chart .hd { fill: #000; }
.chart .ct { font: 16.500px "Liberation Sans", sans-serif; fill: #111; text-anchor: middle; }
.sq-red { fill: none; stroke: #e02020; stroke-width: 1; }
.sq-green { fill: none; stroke: #1a9a1a; stroke-width: 1; }
.text { padding-left: 113px; font: 13.450px/21px "Liberation Sans", sans-serif; color: #111; }
.text p { margin: 0 0 13px; white-space: nowrap; }
.text p.first { letter-spacing: .18px; }
.text em { font-style: italic; }
.sq { text-decoration: underline wavy #1a9a1a; }
.text .slide { font: 15.900px/21px "Liberation Serif", serif; margin-bottom: 0; }
.curly { margin-left: 118px; margin-right: 30px; }

.vscroll { width: 16px; flex: none; display: flex; flex-direction: column; align-items: center; background: linear-gradient(#8ea9d0, #7f9cc7); position: relative; border-top: 1px solid #9fbde3; }
.split { width: 8px; height: 2px; background: #46566e; margin-top: 3px; }
.vs-ico { width: 15px; height: 15px; margin-top: 3px; background: #c3c9d4; border: 1px solid #7d8aa0; display: flex; align-items: center; justify-content: center; }
.arr-up { width: 0; height: 0; border: 5px solid transparent; border-bottom: 4px solid #3e5b86; border-top: 0; margin-top: 6px; }
.thumb { width: 14px; height: 90px; margin-top: 116px; background: linear-gradient(to right, #8a9fbe, #e0e8f4 40%, #c3d2e8); border: 1px solid #5a7298; border-radius: 2px; display: flex; align-items: center; justify-content: center; }
.grip { width: 8px; height: 6px; border-top: 1px solid #5f6f87; border-bottom: 1px solid #5f6f87; background: linear-gradient(#5f6f87, #5f6f87) center/100% 1px no-repeat; }
.arr-dn { width: 0; height: 0; border: 5px solid transparent; border-top: 4px solid #3e5b86; border-bottom: 0; margin-top: auto; }
.vs-btns { height: 46px; width: 100%; margin-top: 6px; background: #b3c9e6; display: flex; flex-direction: column; align-items: center; justify-content: space-around; padding: 4px 0 2px; }

/* pane */
.pane { width: 198px; margin-left: 3px; margin-top: 1px; height: 853px; background: #d3e2f4; border-bottom: 2px solid #7f9fc8; flex: none; font-family: "Liberation Sans", sans-serif; font-size: 11px; }
.pane-head { height: 20px; display: flex; align-items: center; padding: 4px 8px 0 3px; background: linear-gradient(#c6dbf5, #b9d1f0); color: #15428b; font: bold 12.500px "Liberation Sans", sans-serif; white-space: nowrap; }
.pane-dd { margin-left: auto; margin-right: 9px; width: 0; height: 0; border: 4px solid transparent; border-top: 5px solid #15428b; border-bottom: 0; }
.pane-body { padding: 0 9px 0 7px; }
.lab { margin-top: 9px; color: #15428b; }
.srch { margin-top: 2px; display: flex; align-items: center; justify-content: space-between; height: 19px; }
.inp { width: 157px; height: 19px; background: #fff; border: 1px solid #8daed8; padding-left: 2px; line-height: 17px; white-space: nowrap; }
.sel { display: flex; align-items: center; justify-content: space-between; background: #fff; border: 1px solid #8daed8; padding: 0 1px 0 2px; }
.sel-all { margin-top: 4px; height: 19px; padding-right: 2px; padding-left: 3px; }
.navs { margin-top: 5px; height: 22px; display: flex; gap: 11px; padding-left: 1px; }
.nav { height: 22px; display: flex; align-items: center; background: #e5e6da; border: 1px solid #cfd0c0; border-radius: 3px; color: #9aa2ac; padding-left: 3px; }
.nav-b { width: 74px; }
.nav-f { width: 41px; }
.nsep { width: 1px; height: 15px; background: #8aa6cc; margin: 0 5px; }
.dd-g { border-top-color: #8f8f7e; }
.nav-b svg { margin-right: 1px; }
.results { margin-top: 4px; height: 707px; background: #fff; border: 1px solid #8daed8; padding: 1px; display: flex; }
.res-main { width: 161px; flex: none; color: #111; white-space: nowrap; }
.res-bar { flex: 1; display: flex; flex-direction: column; justify-content: space-between; align-items: center; padding: 1px 2px 2px 0; background: #f9f9f3; }
.rb { width: 15px; height: 15px; background: #ecece0; border: 1px solid #d2d2c4; border-radius: 2px; display: flex; align-items: center; justify-content: center; }
.rb-up { width: 0; height: 0; border: 4px solid transparent; border-bottom: 4px solid #b6b6a8; border-top: 0; }
.rb-dn { width: 0; height: 0; border: 4px solid transparent; border-top: 4px solid #b6b6a8; border-bottom: 0; }
.sec { height: 18px; display: flex; align-items: center; gap: 6px; padding-left: 3px; background: #b9d1f2; font-weight: 700; font-size: 12px; }
.tr { padding: 5px 0 0 9px; }
.l { line-height: 13px; }
.t1 { line-height: 12.500px; }
.t2 { margin-top: 4px; }
.in-sel { width: 152px; }
.s1 { margin-top: 3px; height: 19px; }
.t3 { margin-top: 6px; padding-left: 1px; }
.s2 { margin-top: 1px; height: 20px; }
.t4 { margin-top: 7px; }
.go2 { margin-top: 3px; margin-left: 1px; }
.link, .lk span, .pane-foot span { color: #1f50b0; }
.t5 { margin-top: 5px; padding-left: 1px; }
.rule { margin: 9px 0 0; height: 1px; border: 0; background: #8daed8; width: 152px; }
.para { padding-left: 11px; line-height: 13px; }
.p1 { margin-top: 10px; }
.sub { margin-top: 6px; height: 13px; display: flex; align-items: center; gap: 5px; padding-left: 13px; font-weight: 700; font-size: 12px; }
.hit { margin-top: 8px; padding-left: 27px; }
.sec-last { margin-top: 4px; }
.p2 { margin-top: 10px; }
.p3 { margin-top: 4px; font-size: 12px; line-height: 12.500px; }
.ind { padding-left: 27px; }
.p4 { margin-top: 5px; }
.lk { display: flex; align-items: center; height: 16px; gap: 1px; }
.lk1 { margin-top: 6px; }
.lk2 { margin-top: 8px; }
.pane-foot { height: 27px; display: flex; align-items: center; gap: 5px; padding-left: 1px; }

/* status */
.status { height: 22px; flex: none; display: flex; align-items: center; background: linear-gradient(#e4eefb, #d3e2f5 50%, #bcd2ee); border-top: 1px solid #7b9ac4; color: #2d4d7c; position: relative; }
.s-c { height: 21px; display: flex; align-items: center; border-right: 1px solid #afc6e4; flex: none; white-space: nowrap; }
.s-page { width: 105px; padding-left: 8px; }
.s-words { width: 110px; padding-left: 10px; }
.s-lang { width: 147px; padding-left: 8px; }
.s-ru { margin-left: 18px; }
.s-ico { width: 34px; padding-left: 8px; }
.s-right { margin-left: auto; width: 281px; height: 21px; display: flex; align-items: center; background: linear-gradient(#eaf1fb, #dbe7f6 50%, #cddcf1); border-left: 1px solid #b5cbe7; padding-left: 5px; }
.views { width: 92px; height: 19px; display: flex; border: 1px solid #a9c2e2; border-radius: 3px; background: #dfe9f6; flex: none; }
.v { width: 18px; display: flex; align-items: center; justify-content: center; flex: 1; }
.v.on { background: linear-gradient(#fde5ac, #fcc879); }
.zoomv { margin-left: 7px; width: 30px; color: #15428b; font-family: "Liberation Sans", sans-serif; }
.zbtn { width: 15px; height: 15px; margin-left: 9px; border-radius: 50%; border: 1px solid #6a87ae; background: #f0f5fb; display: flex; align-items: center; justify-content: center; font: bold 13px/13px "Liberation Sans", sans-serif; color: #2f4a72; flex: none; }
.ztrack { width: 104px; height: 1px; background: #7e99bf; position: relative; flex: none; }
.ztrack + .zbtn { margin-left: 0; }
.zthumb { position: absolute; left: 47px; top: -7px; }

/* taskbar */
.taskbar { height: 30px; flex: none; display: flex; align-items: center; background: linear-gradient(#2463d8 0, #245edb 10%, #2159d4 85%, #1c48b0); color: #fff; position: relative; border-top: 1px solid #3f7bea; white-space: nowrap; }
.start { width: 96px; height: 29px; display: flex; align-items: center; gap: 6px; padding-left: 10px; background: linear-gradient(#4c9e4c, #3a8a3a 20%, #368536 80%, #2c6e2c); border-radius: 0 10px 10px 0; font: italic bold 17.500px "Liberation Sans", sans-serif; flex: none; text-shadow: 1px 1px 1px #1a4a1a; }
.task { height: 25px; display: flex; align-items: center; border-radius: 3px; background: linear-gradient(#4a8df5, #3c80ef); font-size: 11px; flex: none; position: relative; margin-top: 1px; }
.task svg { margin-right: 5px; }
.tk1 { width: 153px; margin-left: 10px; padding-left: 11px; }
.tk1 svg, .tk2 svg { margin-right: 12px; }
.tk2 { width: 158px; margin-left: 7px; padding-left: 11px; }
.tk3 { width: 160px; margin-left: 1px; padding-left: 11px; background: linear-gradient(#1b4cb0, #1e52bb); }
.cnt { color: #f4d372; margin-right: 4px; font-size: 12px; }
.tk3 svg { margin-right: 2px; }
.t-dd { position: absolute; right: 4px; top: 11px; width: 0; height: 0; border: 3px solid transparent; border-top: 4px solid #fff; border-bottom: 0; }
.tk4 { width: 155px; margin-left: 1px; padding-left: 10px; }
.tk5 { width: 159px; margin-left: 4px; padding-left: 10px; }
.lang { position: absolute; left: 1534px; top: 3px; width: 16px; height: 24px; text-align: center; line-height: 24px; background: #2a6bd6; font-size: 11px; }
.tray { margin-left: auto; width: 111px; height: 29px; display: flex; align-items: center; gap: 3px; background: linear-gradient(#1a93e8, #0f82dc 80%, #0d6fc4); border-left: 1px solid #103c90; padding-left: 12px; position: relative; }
.tray-chev { position: absolute; left: -9px; top: 5px; width: 18px; height: 18px; border-radius: 50%; background: #e3eefb; border: 1px solid #7aa6dc; display: flex; align-items: center; justify-content: center; }
.clock { margin-left: 5px; font: 11.500px "Noto Sans", sans-serif; }
```
